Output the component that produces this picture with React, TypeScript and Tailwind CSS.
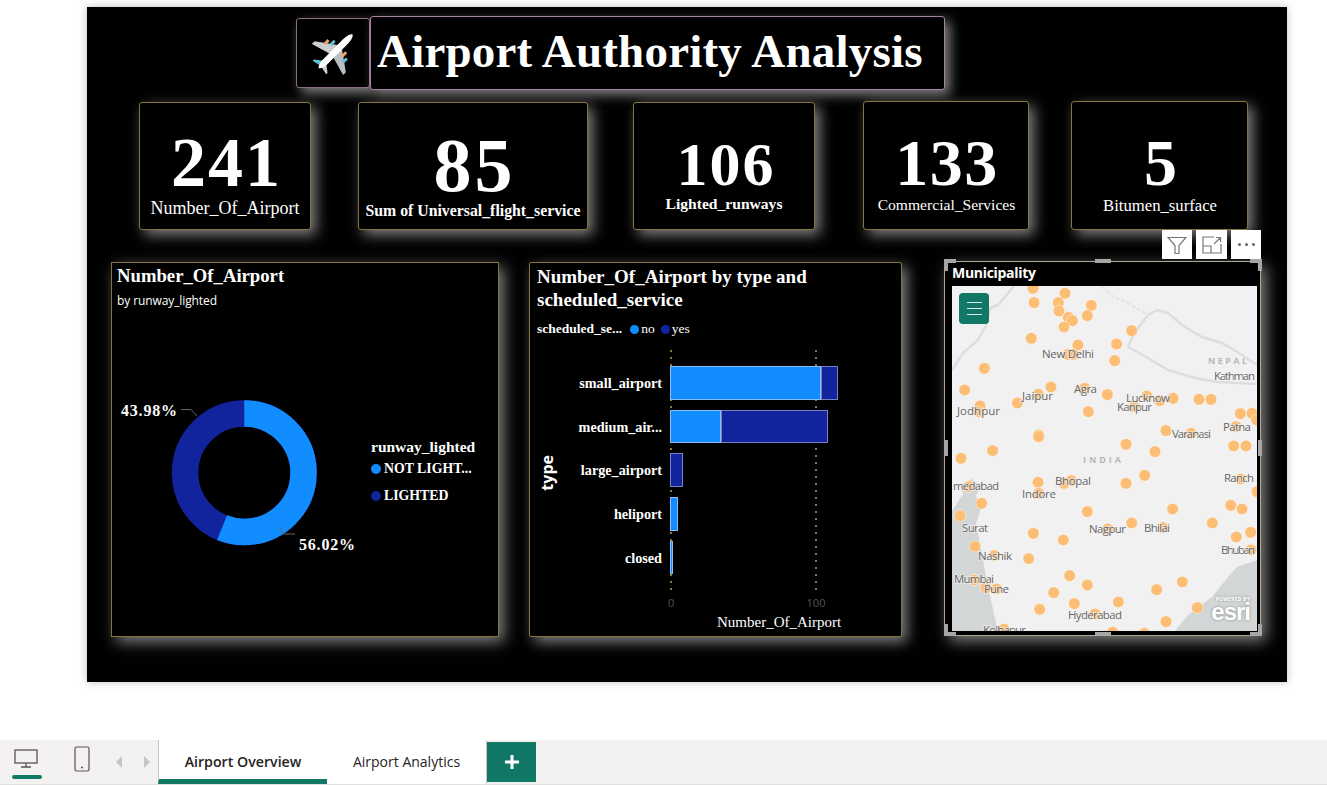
const serif = "font-['Liberation_Serif',serif]";

const kpis = [
  { value: "241", label: "Number_Of_Airport", box: "ml-[52px] w-[172px] h-[128px] mt-px", valueCls: "text-[70px] tracking-[2px] leading-[70px] mt-[25px] pl-[3px]", labelCls: "text-[18px] font-normal -mt-[3px]" },
  { value: "85", label: "Sum of Universal_flight_service", box: "ml-[47px] w-[230px] h-[128px] mt-px", valueCls: "text-[76px] tracking-[3px] leading-[76px] mt-[24px] pl-[3px]", labelCls: "text-[15.800px] font-bold -mt-[4px]" },
  { value: "106", label: "Lighted_runways", box: "ml-[45px] w-[182px] h-[128px] mt-px", valueCls: "text-[62px] tracking-[2px] leading-[62px] mt-[30px] pl-[4px]", labelCls: "text-[15.600px] font-bold -mt-[3px]" },
  { value: "133", label: "Commercial_Services", box: "ml-[48px] w-[166px] h-[129px]", valueCls: "text-[66px] tracking-[1.500px] leading-[66px] mt-[28px] pl-[2px]", labelCls: "text-[15.600px] font-normal -mt-[3px] pl-[1px]" },
  { value: "5", label: "Bitumen_surface", box: "ml-[42px] w-[177px] h-[129px]", valueCls: "text-[66px] leading-[66px] mt-[28px] pl-[2px]", labelCls: "text-[16.700px] font-normal -mt-[3px] pl-[1px]" },
];

const bars = [
  { label: "small_airport", no: 151, yes: 17 },
  { label: "medium_air...", no: 51, yes: 107 },
  { label: "large_airport", no: 0, yes: 13 },
  { label: "heliport", no: 8, yes: 0 },
  { label: "closed", no: 3, yes: 0 },
];

// dots read off the two map crops: [x, y] in crop pixels
const topDots = [[294,190],[390,205],[297,233],[370,233],[469,241],[372,258],[400,277],[412,287],[457,272],[387,306],[590,317],[289,340],[429,360],[545,357],[399,388],[415,388],[539,407],[148,430],[89,495],[348,486],[310,508],[449,490],[517,509],[247,534],[135,543],[132,560],[460,560],[635,513],[674,527],[714,520],[792,523],[828,523],[597,545],[916,566],[951,565],[965,585],[693,617],[768,625],[903,605],[311,630]];
const bottomDots = [[311,20],[173,62],[78,85],[573,43],[660,65],[896,48],[933,48],[629,136],[573,160],[309,157],[387,160],[409,152],[102,170],[311,190],[916,147],[966,185],[140,220],[75,257],[457,245],[713,237],[887,226],[921,237],[590,279],[518,297],[683,293],[832,279],[295,310],[385,330],[947,307],[904,321],[120,349],[178,377],[281,386],[948,360],[404,437],[457,465],[356,488],[665,479],[742,456],[314,538],[418,521],[550,516],[480,552],[787,533],[693,575],[207,597],[533,607],[628,610],[117,450],[153,473],[185,477]];
const dots = [
  ...topDots.map(([x, y]) => [x / 3 - 17, y / 3 - 61]),
  ...bottomDots.map(([x, y]) => [x / 3 - 17, y / 3 + 144]),
];

// map labels: text, left, right, baseline in map pixels
const places: [string, number, number, number][] = [
  ["New Delhi", 90, 142, 72],
  ["Kathman", 262, 303, 94],
  ["Jaipur", 70, 101, 114],
  ["Agra", 122, 145, 107],
  ["Lucknow", 174, 218, 116],
  ["Kanpur", 165, 200, 125],
  ["Jodhpur", 5, 48, 129],
  ["Patna", 271, 299, 145],
  ["Varanasi", 220, 259, 152],
  ["medabad", 1, 47, 204],
  ["Bhopal", 103, 139, 199],
  ["Indore", 70, 104, 212],
  ["Ranch", 272, 302, 196],
  ["Surat", 10, 36, 246],
  ["Nagpur", 137, 174, 247],
  ["Bhilai", 192, 218, 246],
  ["Nashik", 26, 60, 274],
  ["Bhuban", 269, 303, 268],
  ["Mumbai", 2, 42, 297],
  ["Pune", 32, 57, 307],
  ["Hyderabad", 116, 170, 333],
  ["Kolhapur", 31, 74, 348],
];

function Plane() {
  return (
    <svg viewBox="-24 -24 48 48" className="w-[46px] h-[46px] ml-[3px] -mt-[2px]">
      <g transform="rotate(45)">
        <path d="M-2 -8 L-23 7 L-23 11 L-2 5 Z" fill="#c9ced3" />
        <path d="M2 -8 L23 7 L23 11 L2 5 Z" fill="#b8bec4" />
        <rect x="-15" y="-4" width="3" height="6" fill="#f2a36b" />
        <rect x="-10" y="-8" width="3" height="6" fill="#5cc4d6" />
        <rect x="12" y="-4" width="3" height="6" fill="#5cc4d6" />
        <rect x="7" y="-8" width="3" height="6" fill="#f2a36b" />
        <path d="M-2 15 L-10 21 L-10 23 L-1 21 Z" fill="#5cc4d6" />
        <path d="M2 15 L10 21 L10 23 L1 21 Z" fill="#c9ced3" />
        <path d="M0 -26 C3 -24 3.400 -18 3.400 -12 L3.400 14 C3.400 20 1.500 23 0 24 C-1.500 23 -3.400 20 -3.400 14 L-3.400 -12 C-3.400 -18 -3 -24 0 -26 Z" fill="#ffffff" />
      </g>
    </svg>
  );
}

function Donut() {
  return (
    <svg width="250" height="160" className="shrink-0">
      <circle cx="129.300" cy="72.700" r="59.250" fill="none" stroke="#12239E" strokeWidth="26.500" />
      <circle cx="129.300" cy="72.700" r="59.250" fill="none" stroke="#118DFF" strokeWidth="26.500" strokeDasharray="208.600 372.300" transform="rotate(-90 129.300 72.700)" />
      <path d="M66 9.500 H76 L82 16" fill="none" stroke="#666" />
      <path d="M164.500 127 L169 134 H180" fill="none" stroke="#666" />
      <text x="6" y="16" fill="#fff" fontSize="16" fontWeight="700" className={serif} letterSpacing="0.8">43.98%</text>
      <text x="184" y="150" fill="#fff" fontSize="16" fontWeight="700" className={serif} letterSpacing="0.8">56.02%</text>
    </svg>
  );
}

function MapArt() {
  return (
    <svg width="305" height="345" className="block">
      <rect width="305" height="345" fill="#f1f1f1" />
      <path d="M0 225 L11 208 L8 199 L20 193 L28 200 L24 210 L29 222 L24 238 L28 257 L33 285 L38 310 L46 345 L0 345 Z" fill="#d3d6d6" />
      <path d="M223 345 L236 329 L260 311 L277 290 L285 281 L305 274 L305 345 Z" fill="#d3d6d6" />
      <g fill="none" stroke="#dcdede" strokeWidth="2.500">
        <path d="M0 84 L11 67 L26 54 L34 39 L38 22 L46 19 L62 0" />
        <path d="M176 61 L183 46 L196 29 L205 24 L216 27 L230 39 L250 51 L270 57 L287 67 L305 79" />
        <path d="M176 61 L196 72 L216 84 L243 92 L266 96 L305 98" />
        <path d="M150 0 L160 10 L176 17 L196 29" stroke="#e4e5e5" strokeDasharray="4 2" />
      </g>
      {dots.map(([x, y], i) => (
        <circle key={i} cx={x} cy={y} r="5.800" fill="#fcbd74" stroke="#fff" strokeOpacity="0.45" />
      ))}
      {places.map(([name, left, right, y]) => (
        <text key={name} x={left} y={y} textLength={right - left} lengthAdjust="spacing" fontSize="11.500" fill="#666" stroke="#f1f1f1" strokeWidth="2" strokeOpacity="0.6" paintOrder="stroke" className="font-['Open_Sans',sans-serif]">{name}</text>
      ))}
      <text x="256" y="78" textLength="39" lengthAdjust="spacing" fontSize="9" fontWeight="700" fill="#b8b8b8" className="font-['Open_Sans',sans-serif]">NEPAL</text>
      <text x="131" y="177" textLength="38" lengthAdjust="spacing" fontSize="9" fontWeight="700" fill="#b8b8b8" className="font-['Open_Sans',sans-serif]">INDIA</text>
    </svg>
  );
}

function Handle({ className }: { className: string }) {
  return <div className={`absolute bg-[#a6a6a6] ${className}`} />;
}

export default function App() {
  return (
    <div className="relative w-[1327px] h-[785px] overflow-hidden bg-white flex flex-col justify-between pt-[7px] font-['Open_Sans',sans-serif]">
      <div className="ml-[87px] w-[1200px] h-[675px] bg-black shadow-[0_0_8px_rgba(0,0,0,0.25)] overflow-visible">
        {/* header */}
        <div className="flex items-start pl-[209px] pt-[9px]">
          <div className="mt-[2px] w-[74px] h-[70px] flex items-center justify-center rounded-[3px] border border-[#8d6f88] bg-black shadow-[5px_5px_12px_rgba(255,255,255,0.5)]">
            <Plane />
          </div>
          <div className={`w-[575px] h-[74px] pl-[6px] rounded-[3px] border border-[#a8809f] bg-black shadow-[5px_5px_12px_rgba(255,255,255,0.5)] text-white font-bold text-[47px] leading-[68px] tracking-[0.2px] whitespace-nowrap ${serif}`}>
            Airport Authority Analysis
          </div>
        </div>

        {/* kpi cards */}
        <div className="flex items-start mt-[11px]">
          {kpis.map((k) => (
            <div key={k.label} className={`${k.box} shrink-0 flex flex-col items-center rounded-[3px] border border-[#86743a] bg-black shadow-[5px_5px_14px_rgba(255,255,255,0.5)] text-white whitespace-nowrap ${serif}`}>
              <div className={`font-bold ${k.valueCls}`}>{k.value}</div>
              <div className={k.labelCls}>{k.label}</div>
            </div>
          ))}
        </div>

        {/* charts */}
        <div className="flex items-start mt-[31px]">
          <div className="ml-[24px] w-[388px] h-[375px] mt-px shrink-0 border border-[#86743a] bg-black shadow-[5px_5px_14px_rgba(255,255,255,0.5)] text-white flex flex-col">
            <div className="pl-[5px] pt-px">
              <div className={`font-bold text-[18.700px] leading-[24px] ${serif}`}>Number_Of_Airport</div>
              <div className="text-[12px] leading-[16px] mt-[5px] -tracking-[0.1px]">by runway_lighted</div>
            </div>
            <div className="flex mt-[91px] pl-[3px]">
              <Donut />
              <div className={`mt-[38px] ml-[6px] font-bold ${serif}`}>
                <div className="leading-[18px] text-[15.500px]">runway_lighted</div>
                <div className="flex items-center gap-[3px] mt-[4px] leading-[18px] text-[13.800px]">
                  <span className="w-[10px] h-[10px] rounded-full bg-[#118DFF]" />
                  NOT LIGHT...
                </div>
                <div className="flex items-center gap-[3px] mt-[9px] leading-[18px] text-[13.800px]">
                  <span className="w-[10px] h-[10px] rounded-full bg-[#12239E]" />
                  LIGHTED
                </div>
              </div>
            </div>
          </div>

          <div className="ml-[30px] w-[373px] h-[375px] mt-px shrink-0 rounded-[2px] border border-[#86743a] bg-black shadow-[5px_5px_14px_rgba(255,255,255,0.5)] text-white flex flex-col">
            <div className={`pl-[7px] pt-[2px] ${serif}`}>
              <div className="font-bold text-[19px] leading-[23px]">Number_Of_Airport by type and<br />scheduled_service</div>
              <div className="flex items-center mt-[10px] text-[13.500px] leading-[16px]">
                <span className="font-bold">scheduled_se...</span>
                <span className="ml-[8px] w-[9px] h-[9px] rounded-full bg-[#118DFF]" />
                <span className="ml-[2px]">no</span>
                <span className="ml-[6px] w-[9px] h-[9px] rounded-full bg-[#12239E]" />
                <span className="ml-[2px]">yes</span>
              </div>
            </div>
            <div className="flex mt-[13px]">
              <div className="w-[26px] flex items-center justify-end pb-[36px]">
                <span className="[writing-mode:vertical-rl] rotate-180 font-bold text-[16px] leading-[18px]">type</span>
              </div>
              <div className="relative">
                <div className="absolute left-[114px] top-0 h-[243px] w-[2px] bg-[repeating-linear-gradient(to_bottom,#8a7a3c_0,#8a7a3c_2px,transparent_2px,transparent_7px)]" />
                <div className="absolute left-[259px] top-0 h-[243px] w-[2px] bg-[repeating-linear-gradient(to_bottom,#8a7a3c_0,#8a7a3c_2px,transparent_2px,transparent_7px)]" />
                <div className={`relative flex flex-col gap-[10.200px] pt-[16px] ${serif}`}>
                  {bars.map((b) => (
                    <div key={b.label} className="flex items-center h-[33.500px]">
                      <div className="w-[106px] text-right font-bold text-[14.200px] pt-[2px] whitespace-nowrap">{b.label}</div>
                      <div className="ml-[8px] flex h-[33.500px]">
                        {b.no > 0 && <div className="h-full bg-[#118DFF] border border-[#8cbcf0]" style={{ width: b.no }} />}
                        {b.yes > 0 && <div className="h-full bg-[#12239E] border border-[#7680c2]" style={{ width: b.yes }} />}
                      </div>
                    </div>
                  ))}
                </div>
                <div className="flex mt-[22px] text-[11px] leading-[14px] text-[#555] pl-[111px]">
                  <span className="w-[6px] ml-[1px] text-center">0</span>
                  <span className="ml-[132px] w-[20px] text-center">100</span>
                </div>
                <div className={`ml-[161px] mt-[3px] text-[15px] leading-[18px] whitespace-nowrap ${serif}`}>Number_Of_Airport</div>
              </div>
            </div>
          </div>

          <div className="relative ml-[42px] w-[317px] h-[375px] shrink-0 border border-[#b0a88a] bg-black shadow-[5px_5px_14px_rgba(255,255,255,0.5)] text-white pl-[7px]">
            <div className="font-bold text-[14px] h-[24px] leading-[22px] tracking-[-0.3px]">Municipality</div>
            <div className="relative w-[305px] h-[345px] overflow-hidden">
              <MapArt />
              <div className="absolute left-[7px] top-[7px] w-[30px] h-[31px] rounded-[4px] bg-[#117865] flex flex-col items-center justify-center gap-[5px]">
                <span className="w-[15px] h-px bg-[#d9ede9]" />
                <span className="w-[15px] h-px bg-[#d9ede9]" />
                <span className="w-[15px] h-px bg-[#d9ede9]" />
              </div>
              <div className="absolute right-[7px] bottom-[10px] flex flex-col items-end text-white [text-shadow:0_0_3px_rgba(0,0,0,0.35)]">
                <span className="text-[5px] leading-[6px] font-bold tracking-[0.2px]">POWERED BY</span>
                <span className="text-[24px] leading-[19px] font-bold tracking-[-1px] font-['Liberation_Sans',sans-serif]">esri</span>
              </div>
            </div>

            {/* visual header + selection handles */}
            <div className="absolute -top-[32px] right-[-1px] flex gap-[4px]">
              <div className="w-[30px] h-[29px] bg-white flex items-center justify-center">
                <svg width="20" height="20" viewBox="0 0 20 20" fill="none" stroke="#777" strokeWidth="1.200">
                  <path d="M1 2.500 H19 L12 10.500 V18.500 H8 V10.500 Z" />
                </svg>
              </div>
              <div className="w-[31px] h-[29px] bg-white flex items-center justify-center">
                <svg width="20" height="18" viewBox="0 0 20 18" fill="none" stroke="#777" strokeWidth="1.200">
                  <path d="M1 10 V1 H12 M19 8 V17 H1 V10 H9 V17 M12 8 L18.500 1.500 M14 1.500 H18.500 V6" />
                </svg>
              </div>
              <div className="w-[30px] h-[29px] bg-white flex items-center justify-center gap-[4px]">
                <span className="w-[3px] h-[3px] rounded-full bg-[#666]" />
                <span className="w-[3px] h-[3px] rounded-full bg-[#666]" />
                <span className="w-[3px] h-[3px] rounded-full bg-[#666]" />
              </div>
            </div>
            <Handle className="-left-px -top-[3px] w-[12px] h-[4px]" />
            <Handle className="-left-px -top-[3px] w-[4px] h-[12px]" />
            <Handle className="-right-[2px] -top-[3px] w-[12px] h-[4px]" />
            <Handle className="-right-[2px] -top-[3px] w-[4px] h-[12px]" />
            <Handle className="-left-px -bottom-px w-[12px] h-[4px]" />
            <Handle className="-left-px -bottom-px w-[4px] h-[12px]" />
            <Handle className="-right-[2px] -bottom-px w-[12px] h-[4px]" />
            <Handle className="-right-[2px] -bottom-px w-[4px] h-[12px]" />
            <Handle className="left-[150px] -top-[3px] w-[16px] h-[4px]" />
            <Handle className="left-[150px] -bottom-px w-[16px] h-[4px]" />
            <Handle className="-left-px top-[178px] w-[4px] h-[16px]" />
            <Handle className="-right-[2px] top-[178px] w-[4px] h-[16px]" />
          </div>
        </div>
      </div>

      {/* page tabs */}
      <div className="flex h-[45px] bg-[#f3f2f1] border-b border-[#e1dfdd] shrink-0">
        <div className="relative w-[158px] shrink-0 flex items-center">
          <svg width="24" height="19" viewBox="0 0 24 19" fill="none" stroke="#5a5254" strokeWidth="1.300" className="ml-[14px] -mt-[7px]">
            <rect x="1" y="1" width="22" height="13" />
            <path d="M12 14 V18 M7 18 H17" />
          </svg>
          <svg width="16" height="26" viewBox="0 0 16 26" fill="none" stroke="#5a5254" strokeWidth="1.200" className="ml-[36px] -mt-[7px]">
            <rect x="1" y="1" width="14" height="24" rx="1.500" />
            <path d="M7 21.500 H9" strokeWidth="1.500" />
          </svg>
          <svg width="7" height="12" viewBox="0 0 7 12" fill="#c8c6c4" className="ml-[26px]"><path d="M6 0 V12 L0 6 Z" /></svg>
          <svg width="7" height="12" viewBox="0 0 7 12" fill="#c8c6c4" className="ml-[21px]"><path d="M0 0 V12 L6 6 Z" /></svg>
          <span className="absolute left-[12px] top-[35px] w-[30px] h-[4px] rounded-full bg-[#117865]" />
        </div>
        <div className="w-[169px] h-[44px] shrink-0 bg-white border-l border-[#c8c6c4] border-b-[5px] border-b-[#117865] flex items-center justify-center text-[14.200px] font-semibold text-[#252423] pt-[4px]">
          Airport Overview
        </div>
        <div className="w-[160px] h-[44px] shrink-0 bg-white border-r border-[#c8c6c4] flex items-center justify-center text-[14px] text-[#252423] pb-[2px]">
          Airport Analytics
        </div>
        <div className="w-[49px] h-[40px] mt-[2px] shrink-0 bg-[#117865] flex items-center justify-center">
          <svg width="14" height="14" viewBox="0 0 14 14" fill="#fff"><path d="M5.500 0 H8.500 V5.500 H14 V8.500 H8.500 V14 H5.500 V8.500 H0 V5.500 H5.500 Z" /></svg>
        </div>
      </div>
    </div>
  );
}
